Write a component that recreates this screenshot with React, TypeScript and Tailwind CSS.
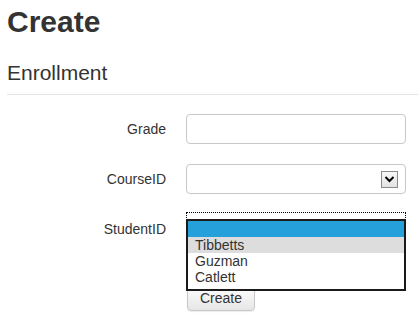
import React from "react";

function Label({ children }: { children: React.ReactNode }) {
  return (
    <div className="w-[159px] text-right text-[14px] leading-[16px] text-[#333]">{children}</div>
  );
}

export default function App() {
  return (
    <div className="w-[418px] h-[323px] overflow-hidden bg-white text-[#333] font-['Liberation_Sans',Arial,sans-serif] pl-[7px]">
      <h1 className="mt-[5px] text-[30px] leading-[33px] font-bold text-[#333]">Create</h1>
      <h4 className="mt-[23px] text-[21px] leading-[23px] font-normal text-[#333]">Enrollment</h4>
      <div className="mt-[10px] border-t border-[#e5e5e5]" />
      <div className="mt-[19px] flex flex-col gap-[20px]">
        <div className="flex items-center gap-[20px]">
          <Label>Grade</Label>
          <div className="w-[220px] h-[30px] rounded-[4px] border border-[#c8c8c8] bg-white" />
        </div>
        <div className="flex items-center gap-[20px]">
          <Label>CourseID</Label>
          <div className="w-[220px] h-[30px] rounded-[4px] border border-[#c8c8c8] bg-white flex items-center justify-end pr-[7px]">
            <div className="w-[17px] h-[17px] border border-[#8a8a8a] bg-gradient-to-b from-[#f7f7f7] to-[#e3e3e3] flex items-center justify-center">
              <svg width="11" height="8" viewBox="0 0 11 8">
                <path d="M1.5 2 L5.5 6 L9.5 2" fill="none" stroke="#000" strokeWidth="2" />
              </svg>
            </div>
          </div>
        </div>
        <div className="flex items-start gap-[20px]">
          <div className="h-[30px] flex items-center">
            <Label>StudentID</Label>
          </div>
          <div className="relative w-[220px] h-[30px]">
            <div className="absolute left-0 top-[-2px] w-[220px] h-[10px] border border-dotted border-black" />
            <div className="absolute left-0 top-[5px] w-[220px] h-[72px] border-2 border-[#1a1a1a] bg-white z-10 flex flex-col text-[14px] leading-[16px] text-[#333]">
              <div className="h-[16px] bg-[#26a0da]" />
              <div className="h-[16px] bg-[#dddddd] pl-[7px]">Tibbetts</div>
              <div className="h-[16px] pl-[7px]">Guzman</div>
              <div className="h-[16px] pl-[7px]">Catlett</div>
            </div>
          </div>
        </div>
      </div>
      <div className="mt-[40px] pl-[180px]">
        <button className="h-[27px] px-[12px] rounded-[4px] border border-[#c8c8c8] bg-gradient-to-b from-[#ffffff] to-[#e6e6e6] text-[14px] leading-[16px] text-[#333] font-['Liberation_Sans',Arial,sans-serif] shadow-[0_1px_1px_rgba(0,0,0,0.08)]">
          Create
        </button>
      </div>
    </div>
  );
}
